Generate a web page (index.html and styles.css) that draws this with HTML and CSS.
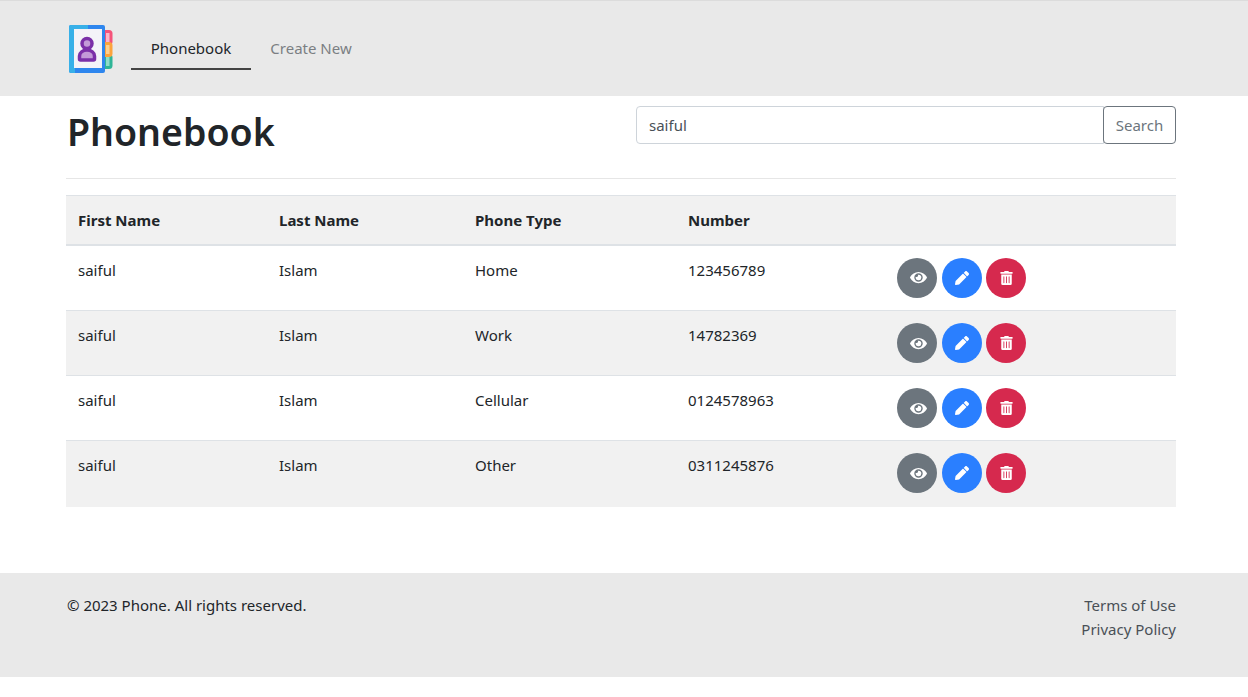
FILE: index.html
```html
<!DOCTYPE html>
<html lang="en">
<head>
<meta charset="utf-8">
<title>Phonebook</title>
<link rel="stylesheet" href="styles.css">
</head>
<body>
<svg class="defs" aria-hidden="true">
  <symbol id="i-eye" viewBox="0 0 576 512"><path d="M572.520 241.400C518.290 135.590 410.930 64 288 64S57.680 135.640 3.480 241.410a32.350 32.350 0 0 0 0 29.190C57.710 376.410 165.070 448 288 448s230.320-71.640 284.520-177.410a32.350 32.350 0 0 0 0-29.190zM288 400a144 144 0 1 1 144-144 143.930 143.930 0 0 1-144 144zm0-240a95.310 95.310 0 0 0-25.310 3.790 47.850 47.850 0 0 1-66.900 66.900A95.780 95.780 0 1 0 288 160z"/></symbol>
  <symbol id="i-pencil" viewBox="0 0 512 512"><path d="M497.900 142.100l-46.100 46.100c-4.700 4.700-12.300 4.700-17 0l-111-111c-4.700-4.700-4.700-12.300 0-17l46.100-46.100c18.700-18.700 49.100-18.700 67.900 0l60.100 60.100c18.800 18.700 18.800 49.100 0 67.900zM284.200 99.800L21.600 362.400.4 483.900c-2.900 16.400 11.400 30.600 27.800 27.800l121.500-21.300 262.600-262.600c4.700-4.700 4.700-12.300 0-17l-111-111c-4.800-4.700-12.400-4.700-17.100 0z"/></symbol>
  <symbol id="i-trash" viewBox="0 0 448 512"><path d="M32 464a48 48 0 0 0 48 48h288a48 48 0 0 0 48-48V128H32zm272-256a16 16 0 0 1 32 0v224a16 16 0 0 1-32 0zm-96 0a16 16 0 0 1 32 0v224a16 16 0 0 1-32 0zm-96 0a16 16 0 0 1 32 0v224a16 16 0 0 1-32 0zM432 32H312l-9.400-18.700A24 24 0 0 0 281.100 0H166.800a23.720 23.720 0 0 0-21.400 13.300L136 32H16A16 16 0 0 0 0 48v32a16 16 0 0 0 16 16h416a16 16 0 0 0 16-16V48a16 16 0 0 0-16-16z"/></symbol>
</svg>
<header class="topbar">
  <svg class="logo" viewBox="0 0 44 48" width="44" height="48" aria-hidden="true">
    <rect x="28" y="5" width="15.500" height="15" rx="3.500" fill="#f5537a"/>
    <rect x="37" y="8" width="3.500" height="9" fill="#fbb6c8"/>
    <rect x="28" y="29" width="15.500" height="15" rx="3.500" fill="#2fb597"/>
    <rect x="37" y="32" width="3.500" height="9" fill="#8fdcc8"/>
    <rect x="28" y="17" width="15.500" height="15" rx="3.500" fill="#fca33d"/>
    <rect x="37" y="20" width="3.500" height="9" fill="#fdd08f"/>
    <rect x="0" y="0" width="36" height="48" rx="2" fill="#2e86ee"/>
    <path d="M2 0h17v4H5v39h1v5H2a2 2 0 0 1-2-2V2a2 2 0 0 1 2-2z" fill="#38b0e8"/>
    <rect x="5" y="4" width="28" height="39" fill="#f4f3f8"/>
    <circle cx="18" cy="18.500" r="5" fill="#c39ad8" stroke="#7b2fa8" stroke-width="3.500"/>
    <path d="M10.500 34v-3a7.500 6 0 0 1 15 0v3a1 1 0 0 1-1 1h-13a1 1 0 0 1-1-1z" fill="#c39ad8" stroke="#7b2fa8" stroke-width="3.500" stroke-linejoin="round"/>
  </svg>
  <nav class="nav">
    <a class="nav-link active" href="#">Phonebook</a>
    <a class="nav-link" href="#">Create New</a>
  </nav>
</header>
<main class="content">
  <div class="title-row">
    <h1>Phonebook</h1>
    <form class="search">
      <input class="search-input" type="text" value="saiful">
      <button class="search-btn" type="button">Search</button>
    </form>
  </div>
  <hr class="rule">
  <table class="people">
    <thead>
      <tr><th class="c1">First Name</th><th class="c2">Last Name</th><th class="c3">Phone Type</th><th class="c4">Number</th><th></th></tr>
    </thead>
    <tbody>
      <tr><td>saiful</td><td>Islam</td><td>Home</td><td>123456789</td><td>
        <div class="actions">
          <a class="round grey" href="#"><svg class="ic-eye"><use href="#i-eye"/></svg></a>
          <a class="round blue" href="#"><svg class="ic-pencil"><use href="#i-pencil"/></svg></a>
          <a class="round red" href="#"><svg class="ic-trash"><use href="#i-trash"/></svg></a>
        </div>
      </td></tr>
      <tr><td>saiful</td><td>Islam</td><td>Work</td><td>14782369</td><td>
        <div class="actions">
          <a class="round grey" href="#"><svg class="ic-eye"><use href="#i-eye"/></svg></a>
          <a class="round blue" href="#"><svg class="ic-pencil"><use href="#i-pencil"/></svg></a>
          <a class="round red" href="#"><svg class="ic-trash"><use href="#i-trash"/></svg></a>
        </div>
      </td></tr>
      <tr><td>saiful</td><td>Islam</td><td>Cellular</td><td>0124578963</td><td>
        <div class="actions">
          <a class="round grey" href="#"><svg class="ic-eye"><use href="#i-eye"/></svg></a>
          <a class="round blue" href="#"><svg class="ic-pencil"><use href="#i-pencil"/></svg></a>
          <a class="round red" href="#"><svg class="ic-trash"><use href="#i-trash"/></svg></a>
        </div>
      </td></tr>
      <tr><td>saiful</td><td>Islam</td><td>Other</td><td>0311245876</td><td>
        <div class="actions">
          <a class="round grey" href="#"><svg class="ic-eye"><use href="#i-eye"/></svg></a>
          <a class="round blue" href="#"><svg class="ic-pencil"><use href="#i-pencil"/></svg></a>
          <a class="round red" href="#"><svg class="ic-trash"><use href="#i-trash"/></svg></a>
        </div>
      </td></tr>
    </tbody>
  </table>
</main>
<footer class="footer">
  <p class="copy">© 2023 Phone. All rights reserved.</p>
  <div class="links">
    <a href="#">Terms of Use</a>
    <a href="#">Privacy Policy</a>
  </div>
</footer>
</body>
</html>
```
FILE: styles.css
```css
* { box-sizing: border-box; }
html, body { margin: 0; height: 697px; overflow: hidden; }
body {
  font-family: "Noto Sans", "Open Sans", sans-serif;
  font-size: 15px;
  line-height: 24px;
  color: #212529;
  background: #fff;
}
a { text-decoration: none; }
.defs { display: none; }

.topbar {
  height: 96px;
  background: #e9e9e9;
  border-top: 1px solid #dcdcdc;
  padding: 24px 72px 0 69px;
  display: flex;
  align-items: flex-start;
}
.logo { display: block; flex: none; }
.nav { display: flex; margin-left: 18px; padding-top: 2px; }
.nav-link {
  display: block;
  width: 120px;
  height: 43px;
  padding-top: 9px;
  text-align: center;
  color: #7b7f83;
}
.nav-link.active { color: #212529; border-bottom: 2px solid #444; }

.content { height: 477px; padding: 0 72px 0 66px; }
.title-row { display: flex; justify-content: space-between; align-items: flex-start; height: 82px; }
h1 {
  margin: 11px 0 0 1px;
  font-size: 37.500px;
  line-height: 50px;
  font-weight: 600;
  color: #212529;
}
.search { display: flex; margin-top: 10px; }
.search-input {
  width: 468px;
  height: 38px;
  padding: 0 12px;
  border: 1px solid #ced4da;
  border-radius: 4px 0 0 4px;
  font: inherit;
  color: #495057;
  outline: 0;
}
.search-btn {
  width: 73px;
  height: 38px;
  padding: 0;
  border: 1px solid #6c757d;
  border-radius: 4px;
  margin-left: -1px;
  background: #fff;
  font: inherit;
  color: #6c757d;
}
.rule { margin: 0; border: 0; border-top: 1px solid #e6e6e6; }

.people {
  margin-top: 16px;
  width: 1110px;
  border-collapse: collapse;
  table-layout: fixed;
}
.c1 { width: 201px; }
.c2 { width: 196px; }
.c3 { width: 213px; }
.c4 { width: 209px; }
.people th {
  height: 49px;
  padding: 0 12px;
  text-align: left;
  font-weight: 700;
  background: #f1f1f1;
  border-top: 1px solid #dee2e6;
  border-bottom: 2px solid #dee2e6;
}
.people td {
  height: 65px;
  padding: 12px 12px 0;
  vertical-align: top;
  border-top: 1px solid #dee2e6;
}
.people tbody tr:first-child td { border-top: 0; height: 66px; }
.people tbody tr:nth-child(even) td { background: #f1f1f1; }
.people tbody tr:last-child td { height: 66px; }
.actions { display: flex; gap: 4.500px; }

.round {
  width: 40px;
  height: 40px;
  border-radius: 50%;
  display: flex;
  align-items: center;
  justify-content: center;
  flex: none;
}
.round svg { display: block; fill: #fff; }
.ic-eye { width: 17px; height: 15px; margin-left: 2px; }
.ic-pencil { width: 14px; height: 14px; }
.ic-trash { width: 13px; height: 14px; }
.grey { background: #6c757d; }
.blue { background: #2a7fff; }
.red { background: #d6294e; }

.footer {
  height: 104px;
  background: #e9e9e9;
  padding: 20px 72px 0 67px;
  display: flex;
  justify-content: space-between;
  align-items: flex-start;
}
.copy { margin: 0; }
.links { display: flex; flex-direction: column; align-items: flex-end; }
.links a { color: #495057; }
```
